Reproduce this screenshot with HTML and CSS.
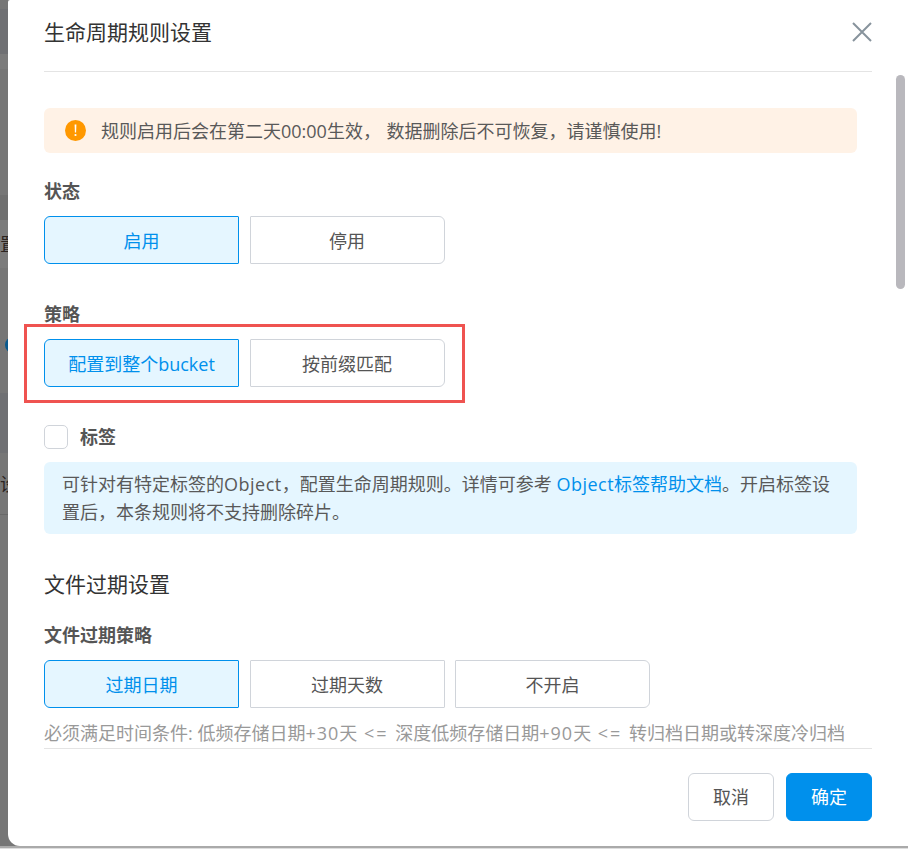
FILE: index.html
```html
<!DOCTYPE html>
<html lang="zh-CN">
<head>
  <meta charset="UTF-8">
  <title>生命周期规则设置</title>
  <meta name="viewport" content="width=device-width, initial-scale=1.0">
  <link rel="stylesheet" href="styles.css">
</head>
<body>

<div class="page">
  <div class="backdrop">
    <div class="band" style="height: 9px"></div>
    <div class="band band-dark" style="height: 45px"></div>
    <div class="band band-light" style="height: 15px"></div>
    <div class="band" style="height: 126px"></div>
    <div class="band band-shade" style="height: 25px"></div>
    <div class="band band-light band-text" style="height: 48px"><span>置</span></div>
    <div class="band band-dot" style="height: 125px"><i class="dot"></i></div>
    <div class="band band-dark" style="height: 60px"></div>
    <div class="band band-text band-line" style="height: 62px"><span>设</span></div>
    <div class="band" style="height: 331px"></div>
  </div>

  <div class="modal">
    <div class="modal-head">
      <h3>生命周期规则设置</h3>
      <svg class="close" width="20" height="20" viewBox="0 0 20 20">
        <path d="M1 1 L19 19 M19 1 L1 19" stroke="#87939c" stroke-width="2" fill="none"/>
      </svg>
    </div>

    <div class="modal-body">
      <div class="alert">
        <svg class="alert-icon" width="21" height="21" viewBox="0 0 21 21">
          <circle cx="10.5" cy="10.5" r="10.5" fill="#ff9800"/>
          <path d="M9.6 4.5 H11.4 L11.1 12.5 H9.9 Z" fill="#fff"/>
          <circle cx="10.5" cy="15" r="1.1" fill="#fff"/>
        </svg>
        <span class="alert-text">规则启用后会在第二天00:00生效， 数据删除后不可恢复，请谨慎使用!</span>
      </div>

      <div class="label first">状态</div>
      <div class="btn-group">
        <div class="opt active">启用</div>
        <div class="opt last">停用</div>
      </div>

      <div class="label">策略</div>
      <div class="btn-group">
        <div class="opt active">配置到整个bucket</div>
        <div class="opt last">按前缀匹配</div>
      </div>

      <div class="check-row">
        <span class="checkbox"></span>
        <span class="check-label">标签</span>
      </div>
      <div class="info">
        可针对有特定标签的<span class="word">Object</span>，配置生命周期规则。详情可参考 <a href="#"><span class="word">Object</span>标签帮助文档</a>。开启标签设置后，本条规则将不支持删除碎片。
      </div>

      <h4>文件过期设置</h4>

      <div class="label sub">文件过期策略</div>
      <div class="btn-group">
        <div class="opt active">过期日期</div>
        <div class="opt">过期天数</div>
        <div class="opt last">不开启</div>
      </div>
      <div class="note">必须满足时间条件: 低频存储日期<span class="num">+30</span>天<span class="op"> &lt;= </span>深度低频存储日期<span class="num">+90</span>天<span class="op"> &lt;= </span>转归档日期或转深度冷归档</div>
    </div>

    <div class="modal-foot">
      <div class="btn">取消</div>
      <div class="btn primary">确定</div>
    </div>

    <div class="scrollbar"></div>
    <div class="highlight"></div>
  </div>
</div>
<div class="bottom-edge"></div>

</body>
</html>
```

FILE: styles.css
```css
* {
  box-sizing: border-box;
}

body {
  margin: 0;
  height: 849px;
  overflow: hidden;
  background: #dedede;
  font-family: "Open Sans", "Noto Sans CJK SC", sans-serif;
  font-size: 18px;
  color: #595959;
}

.page {
  display: flex;
  height: 846px;
  background: #777;
}

/* page behind the dialog, only a sliver shows */
.backdrop {
  width: 8px;
  flex-shrink: 0;
  overflow: hidden;
}

.band {
  background: #767676;
  display: flex;
  align-items: center;
  justify-content: flex-end;
  overflow: hidden;
}

.band-dark {
  background: #6f7073;
}

.band-light {
  background: #7b7b7b;
}

.band-shade {
  background: #6f6f6f;
}

.band-line {
  border-bottom: 1px solid #686868;
}

.band-text span {
  flex-shrink: 0;
  width: 18px;
  margin-right: -10px;
  font-size: 18px;
  line-height: 24px;
  color: #2b2320;
}

.band-dot {
  align-items: flex-start;
}

.dot {
  flex-shrink: 0;
  width: 16px;
  height: 16px;
  margin: 69px -13px 0 0;
  border-radius: 50%;
  background: #0b5a8e;
}

.modal {
  position: relative;
  flex: 1;
  padding: 0 36px;
  background: #fff;
  border-radius: 2px 0 0 12px;
}

.modal-head {
  display: flex;
  align-items: center;
  justify-content: space-between;
  height: 72px;
  padding-bottom: 7px;
  border-bottom: 1px solid #e4e4e4;
}

.modal-head h3 {
  margin: 0;
  font-size: 21px;
  font-weight: 400;
  line-height: 30px;
  color: #333;
}

.modal-body {
  height: 676px;
  padding: 36px 15px 0 0;
  overflow: hidden;
}

.alert {
  display: flex;
  align-items: center;
  gap: 15px;
  height: 45px;
  padding-left: 21px;
  background: #fff2e6;
  border-radius: 6px;
}

.alert-text {
  margin-bottom: 2px;
  word-spacing: 1px;
}

.label {
  margin: 36px 0 11px;
  font-weight: 700;
  line-height: 28px;
  color: #555;
}

.label.first {
  margin-top: 24px;
}

.label.sub {
  margin-top: 22px;
}

.btn-group {
  display: flex;
  gap: 10.5px;
}

.opt {
  width: 195px;
  height: 48px;
  line-height: 48px;
  text-align: center;
  border: 1px solid #d0d4da;
  border-radius: 1px;
  color: #555;
  background: #fff;
}

.opt.active {
  color: #0090ec;
  background: #e5f6ff;
  border-color: #0090ec;
  border-radius: 6px 1px 1px 6px;
}

.opt.last {
  border-radius: 1px 6px 6px 1px;
}

.check-row {
  display: flex;
  align-items: center;
  gap: 12px;
  margin-top: 38px;
}

.checkbox {
  width: 24px;
  height: 24px;
  border: 1px solid #d0d4da;
  border-radius: 5px;
}

.check-label {
  font-weight: 700;
  color: #555;
  line-height: 24px;
}

.info {
  margin-top: 13px;
  padding: 8px 18px;
  line-height: 28px;
  background: #e5f6ff;
  border-radius: 6px;
}

.info a {
  color: #0090ec;
  text-decoration: none;
}

.word {
  letter-spacing: 0.5px;
}

.modal-body h4 {
  margin: 35px 0 0;
  font-size: 21px;
  font-weight: 400;
  line-height: 30px;
  color: #333;
}

.note {
  margin-top: 11px;
  line-height: 28px;
  white-space: nowrap;
  color: #999;
}

.num {
  letter-spacing: 1px;
}

.op {
  letter-spacing: 2px;
}

.modal-foot {
  display: flex;
  justify-content: flex-end;
  gap: 12px;
  padding-top: 24px;
  border-top: 1px solid #e4e4e4;
}

.btn {
  width: 86px;
  height: 48px;
  line-height: 46px;
  text-align: center;
  border: 1px solid #d0d4da;
  border-radius: 6px;
  color: #555;
}

.btn.primary {
  color: #fff;
  background: #0090ec;
  border-color: #0090ec;
}

.scrollbar {
  position: absolute;
  top: 75px;
  right: 3px;
  width: 9px;
  height: 214px;
  border-radius: 5px;
  background: #b9b8bd;
}

/* red annotation box drawn over the screenshot */
.highlight {
  position: absolute;
  left: 16px;
  top: 324px;
  width: 441px;
  height: 79px;
  border: 3px solid #ef5350;
}

.bottom-edge {
  height: 2px;
  background: #aaa;
}
```
